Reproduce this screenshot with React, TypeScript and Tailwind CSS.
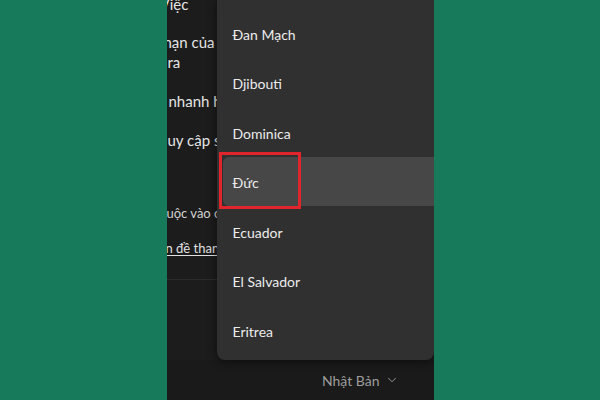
import * as React from "react";
import { ChevronDown } from "lucide-react";

const countries = [
  "Đan Mạch",
  "Djibouti",
  "Dominica",
  "Đức",
  "Ecuador",
  "El Salvador",
  "Eritrea",
];

const SELECTED = "Đức";

export default function App() {
  return (
    <div
      className="w-[600px] h-[400px] bg-[#167a5b] flex justify-center"
      style={{ fontFamily: 'Lato, "Noto Sans", sans-serif' }}
    >
      {/* Screenshot panel */}
      <div className="relative w-[267px] h-full overflow-hidden bg-[#1c1c1c] flex flex-col">
        {/* Settings text behind the menu */}
        <div className="flex-1 flex flex-col text-[15px] text-[#e4e4e4]">
          <div className="-mt-[6px] -ml-[7px] leading-[20px] whitespace-nowrap">Việc</div>
          <div className="mt-[18px] leading-[20px]">
            <div className="-ml-[3px] whitespace-nowrap">
              hạn của <span className="text-[#7aa9e8]">Microsoft</span>
            </div>
            <div className="ml-[1px] whitespace-nowrap">ra</div>
          </div>
          <div className="mt-[19px] ml-[2px] leading-[20px] whitespace-nowrap">nhanh hơn</div>
          <div className="mt-[19px] ml-[1px] leading-[20px] whitespace-nowrap">uy cập sớm</div>
          <div className="mt-[54px] leading-[18px] text-[13px] text-[#d2d2d2] whitespace-nowrap">
            uộc vào các
          </div>
          <div className="mt-[17px] -ml-[1px] leading-[18px] text-[13px] text-[#e0e0e0] underline underline-offset-2 whitespace-nowrap">
            n đề thanh toán
          </div>
          <div className="mt-[22px] h-px bg-[#2b2b2b]" />
        </div>

        {/* Current value */}
        <div className="h-[40px] bg-[#1a1a1a] flex items-center justify-end gap-[5px] pr-[35px] text-[14px] text-[#9d9d9d]">
          <span>Nhật Bản</span>
          <ChevronDown size={14} strokeWidth={1.6} />
        </div>

        {/* Dropdown menu */}
        <div className="absolute left-[50px] right-0 top-0 h-[360px] bg-[#303030] rounded-b-[8px] shadow-[0_2px_10px_rgba(0,0,0,0.5)] pt-[8px] text-[14px] text-[#ececec]">
          {countries.map((c) => (
            <div
              key={c}
              className={
                c === SELECTED
                  ? "h-[49.5px] ml-[6px] pl-[10px] pt-[3px] flex items-center bg-[#474747] rounded-l-[6px]"
                  : "h-[49.5px] pl-[16px] pt-[3px] flex items-center"
              }
            >
              {c}
            </div>
          ))}

          {/* Red highlight box */}
          <div className="absolute left-[2px] top-[152px] w-[82px] h-[57px] border-[3px] border-[#e0262c]" />
        </div>
      </div>
    </div>
  );
}
